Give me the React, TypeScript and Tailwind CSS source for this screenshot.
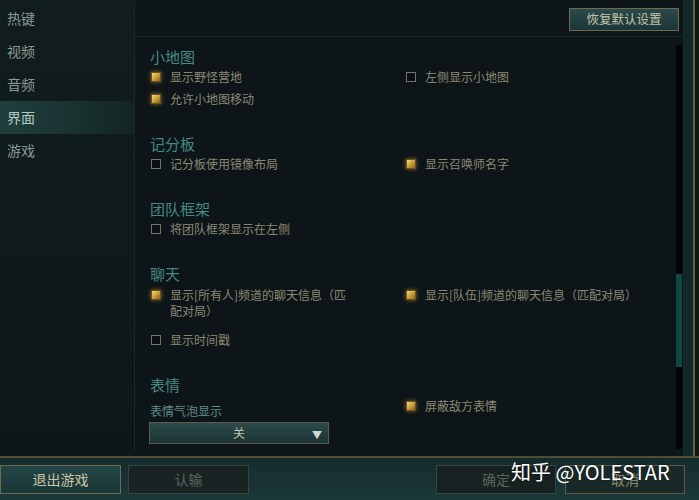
import React from "react";

const FONT = { fontFamily: '"Noto Sans CJK SC", "Noto Sans", sans-serif' };

function Check({ on }: { on: boolean }) {
  return on ? (
    <span className="block w-[10px] h-[10px] shrink-0 border border-[#6b5218] bg-gradient-to-br from-[#f6dc78] via-[#caa13e] to-[#86651e] shadow-[0_0_4px_rgba(225,175,60,0.55)]" />
  ) : (
    <span className="block w-[10px] h-[10px] shrink-0 border border-[#75756a] bg-[#0b1113]" />
  );
}

function Row({ on, children, className = "" }: { on: boolean; children: React.ReactNode; className?: string }) {
  return (
    <div className={"flex items-center gap-[9px] pl-[1px] h-[22px] text-[12px] text-[#8a8873] " + className}>
      <Check on={on} />
      <span className="leading-[16px]">{children}</span>
    </div>
  );
}

function Heading({ children, className = "" }: { children: React.ReactNode; className?: string }) {
  return <div className={"h-[19px] leading-[19px] text-[15px] text-[#458886] " + className}>{children}</div>;
}

export default function App() {
  const items = ["热键", "视频", "音频", "界面", "游戏"];
  return (
    <div className="relative w-[699px] h-[500px] overflow-hidden bg-[#0c1517]" style={FONT}>
      <div className="flex h-[456px]">
        {/* sidebar */}
        <div className="w-[134px] shrink-0 pt-[2px] bg-gradient-to-b from-[#101c1d] to-[#0d1718]">
          {items.map((t) => (
            <div
              key={t}
              className={
                "h-[33px] flex items-center pl-[7px] text-[14px] " +
                (t === "界面"
                  ? "bg-gradient-to-r from-[#1f3f3d] via-[#1a3432] to-[#132423] text-[#b4cbc4]"
                  : "text-[#8a9894]")
              }
            >
              {t}
            </div>
          ))}
        </div>

        {/* main panel */}
        <div className="w-[549px] shrink-0 mt-[2px] h-[449px] flex flex-col bg-[#0e1518] border-l border-[#17292a] rounded-tl-[3px]">
          <div className="h-[35px] flex justify-end pt-[6px] pr-[4px] border-b border-[#1a2528]">
            <div className="w-[110px] h-[23px] flex items-center justify-center text-[12.5px] text-[#c6c2a6] border border-[#6e6a4e] bg-gradient-to-b from-[#2a4a4b] to-[#1c3637]">
              恢复默认设置
            </div>
          </div>
          <div className="flex flex-1">
            <div className="flex-1 pl-[15px] pt-[10px]">
              {/* 小地图 */}
              <Heading>小地图</Heading>
              <div className="grid grid-cols-[255px_1fr]">
                <div>
                  <Row on>显示野怪营地</Row>
                  <Row on>允许小地图移动</Row>
                </div>
                <div>
                  <Row on={false}>左侧显示小地图</Row>
                </div>
              </div>

              {/* 记分板 */}
              <Heading className="mt-[24px]">记分板</Heading>
              <div className="grid grid-cols-[255px_1fr]">
                <Row on={false}>记分板使用镜像布局</Row>
                <Row on>显示召唤师名字</Row>
              </div>

              {/* 团队框架 */}
              <Heading className="mt-[24px]">团队框架</Heading>
              <Row on={false}>将团队框架显示在左侧</Row>

              {/* 聊天 */}
              <Heading className="mt-[24px]">聊天</Heading>
              <div className="grid grid-cols-[255px_1fr]">
                <div>
                  <div className="flex items-start gap-[9px] pl-[1px] pt-[4px] text-[12px] text-[#8a8873]">
                    <span className="mt-[3px]">
                      <Check on />
                    </span>
                    <span className="w-[182px] leading-[16px]">显示[所有人]频道的聊天信息（匹配对局）</span>
                  </div>
                  <Row on={false} className="mt-[10px]">显示时间戳</Row>
                </div>
                <div>
                  <Row on className="mt-[1px]">显示[队伍]频道的聊天信息（匹配对局）</Row>
                </div>
              </div>

              {/* 表情 */}
              <Heading className="mt-[24px]">表情</Heading>
              <div className="grid grid-cols-[255px_1fr]">
                <div>
                  <div className="mt-[8px] h-[18px] leading-[18px] text-[12px] text-[#5f8a86]">表情气泡显示</div>
                  <div className="mt-[2px] -ml-[1px] w-[180px] h-[22px] relative flex items-center justify-center border border-[#5c5b47] bg-gradient-to-b from-[#2c4b4b] to-[#1b3333] text-[12px] text-[#c4c2aa]">
                    关
                    <span className="absolute right-[6px] top-[4px] text-[10px] text-[#d6d6cc]">▼</span>
                  </div>
                </div>
                <div>
                  <Row on className="mt-[1px]">屏蔽敌方表情</Row>
                </div>
              </div>
            </div>
            {/* scrollbar */}
            <div className="w-[6px] mr-[1px] mt-[8px] h-[404px] bg-[#020505] flex flex-col">
              <div className="h-[229px]" />
              <div className="h-[93px] bg-[#0f4842]" />
            </div>
          </div>
        </div>

        {/* right frame */}
        <div className="flex-1 flex">
          <div className="w-[10px] bg-[#13282a]" />
          <div className="w-[2px] bg-[#6c6341]" />
          <div className="flex-1 bg-[#0d1819]" />
        </div>
      </div>

      {/* bottom line */}
      <div className="h-[2px] bg-[#4f4d3a]" />

      {/* bottom bar */}
      <div className="h-[42px] flex items-start pt-[7px] bg-gradient-to-b from-[#142b2c] to-[#1c3839]">
        <div className="w-[121px] h-[29px] flex items-center justify-center text-[14px] text-[#cdc5a4] border border-[#6d6a50] bg-gradient-to-b from-[#234546] to-[#1a3637]">
          退出游戏
        </div>
        <div className="ml-[7px] w-[121px] h-[29px] flex items-center justify-center text-[14px] text-[#56655f] border border-[#354542] bg-[#182322]">
          认输
        </div>
        <div className="ml-[187px] w-[120px] h-[29px] flex items-center justify-center text-[14px] text-[#56655f] border border-[#354542] bg-[#172120]">
          确定
        </div>
        <div className="ml-[9px] w-[120px] h-[29px] flex items-center justify-center text-[14px] text-[#8c8870] border border-[#5d5b46] bg-[#192928]">
          取消
        </div>
      </div>

      {/* watermark */}
      <div className="absolute left-[511px] top-[457px] text-[20px] leading-[30px] text-white whitespace-nowrap [text-shadow:0_0_2px_rgba(0,0,0,0.6)]">
        知乎 @YOLESTAR
      </div>
    </div>
  );
}
